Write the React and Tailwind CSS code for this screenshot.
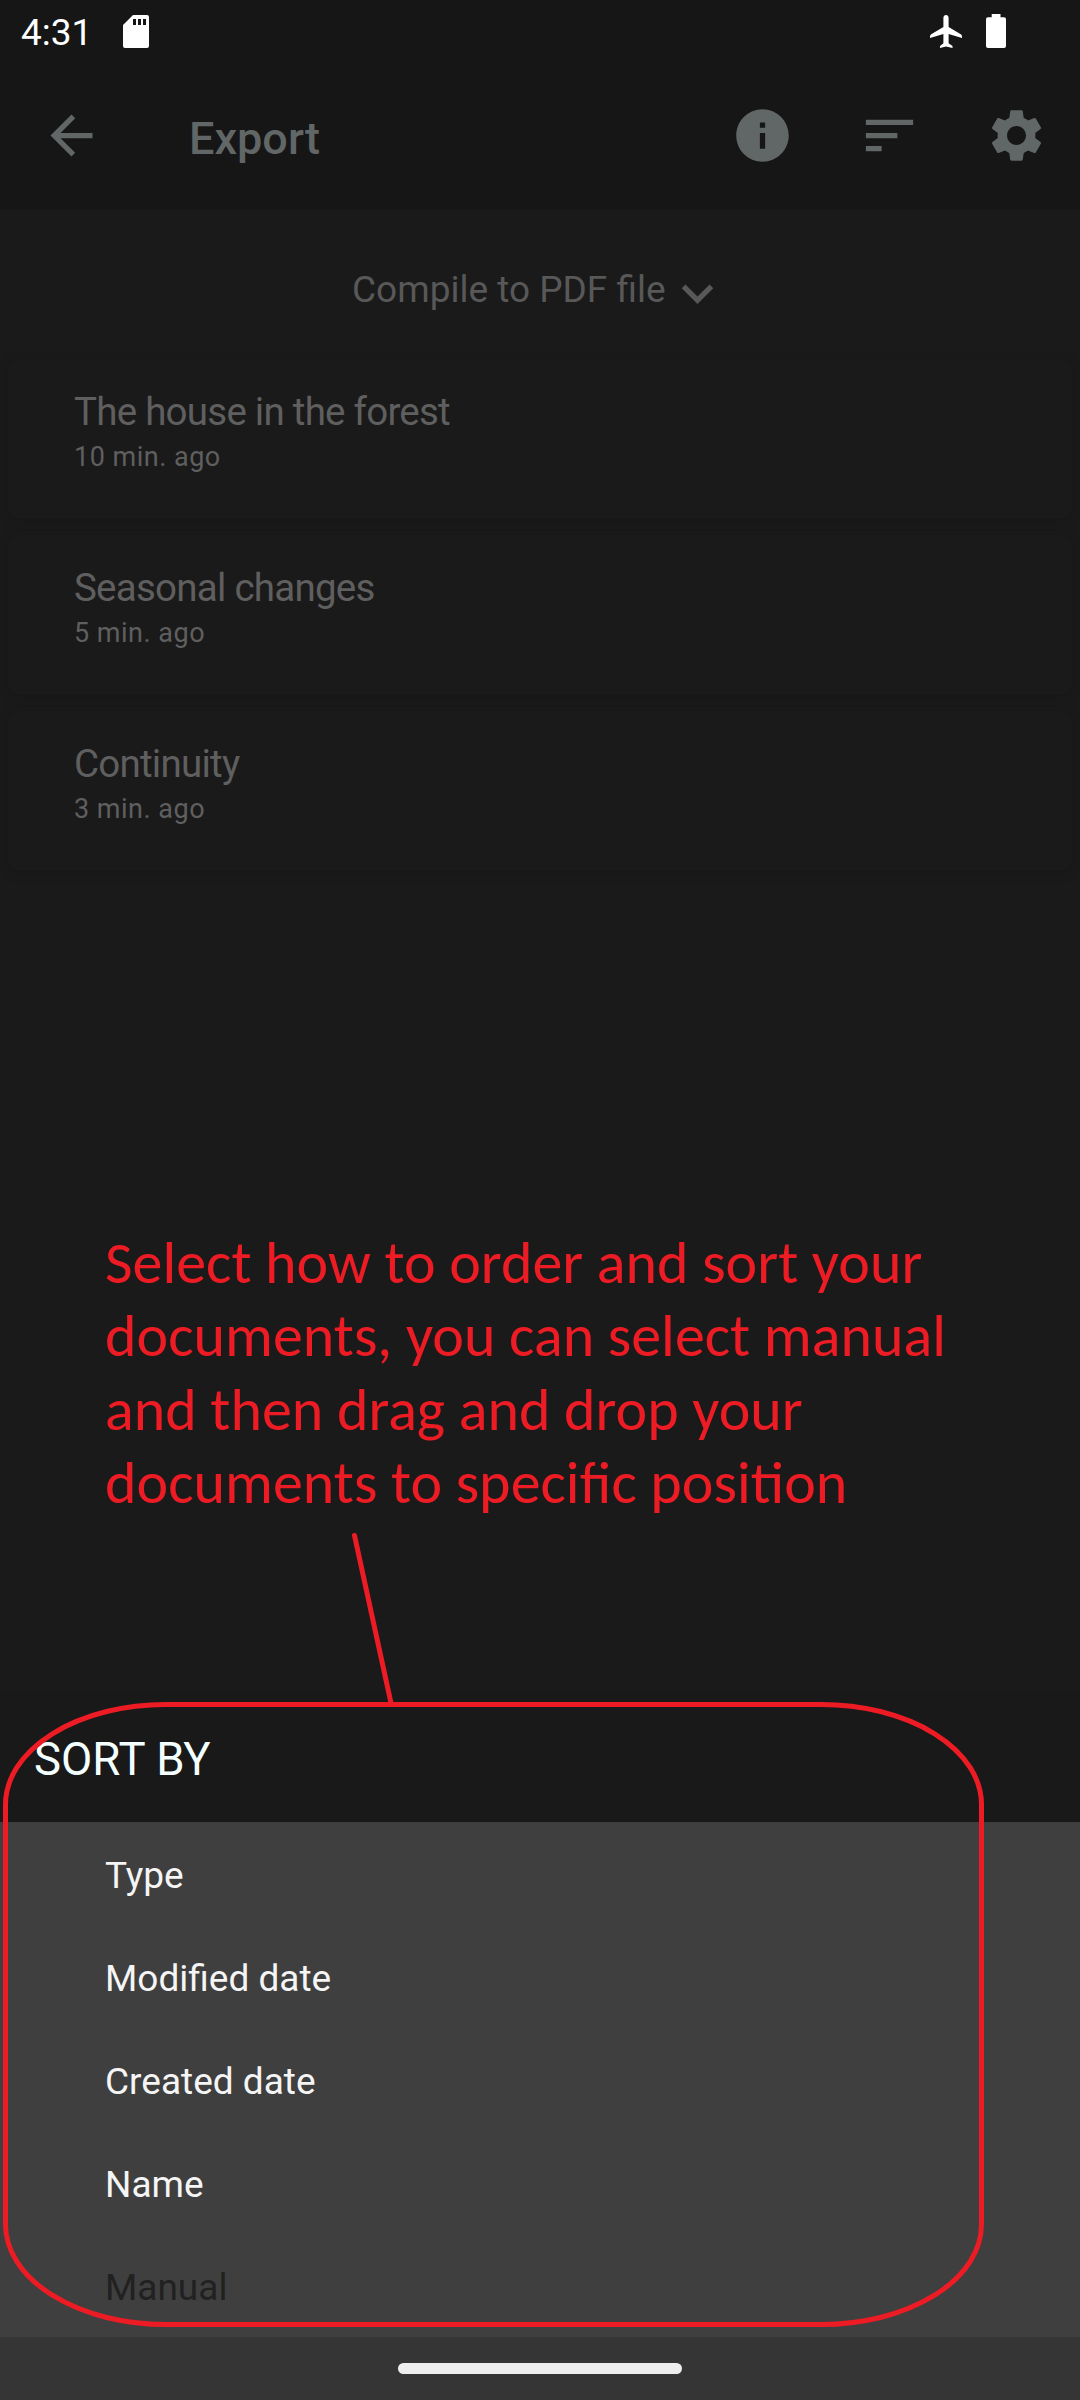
const documents = [
  { title: 'The house in the forest', time: '10 min. ago' },
  { title: 'Seasonal changes', time: '5 min. ago' },
  { title: 'Continuity', time: '3 min. ago' },
];

const sortOptions = [
  { label: 'Type' },
  { label: 'Modified date' },
  { label: 'Created date' },
  { label: 'Name' },
  { label: 'Manual', disabled: true },
];

const noteLines = [
  'Select how to order and sort your',
  'documents, you can select manual',
  'and then drag and drop your',
  'documents to specific position',
];

function Icon({ d, className }) {
  return (
    <svg viewBox="0 0 24 24" className={className} fill="currentColor">
      <path d={d} />
    </svg>
  );
}

function StatusBar() {
  return (
    <div className="flex h-[62px] items-start justify-between pl-[21px] pr-[74px] text-white">
      <div className="flex items-start">
        <span className="mt-[10px] w-[102px] text-[37px] leading-[46px]">4:31</span>
        <svg viewBox="0 0 26 33" className="mt-[15px] h-[33px] w-[26px]" fill="currentColor" fillRule="evenodd">
          <path d="M10 0H24a2 2 0 0 1 2 2V31a2 2 0 0 1-2 2H2a2 2 0 0 1-2-2V10ZM10 4v6h3V4ZM15 4v6h3V4ZM20 4v6h3V4Z" />
        </svg>
      </div>
      <div className="flex items-start gap-[24px] pt-[14px]">
        <svg viewBox="0 0 32 34" className="h-[34px] w-[32px]" fill="currentColor">
          <path d="M16 1c1.5 0 2.6 1.2 2.6 2.8V13l12.2 7.2q1.2.8 1.2 2.2v1.6L18.6 20v9.3l3.9 2.7v2L16 32.5 10 34v-2l3.400-2.700V20L0 24v-1.600q0-1.400 1.200-2.200L13.400 13V3.800C13.400 2.200 14.500 1 16 1Z" />
        </svg>
        <svg viewBox="0 0 20 34" className="h-[34px] w-[20px]" fill="currentColor">
          <path d="M5.700 0h8.800v3.300H18a2 2 0 0 1 2 2V32a2 2 0 0 1-2 2H2a2 2 0 0 1-2-2V5.300a2 2 0 0 1 2-2h3.700Z" />
        </svg>
      </div>
    </div>
  );
}

function Toolbar() {
  return (
    <div className="flex h-[147px] items-center pl-[40px] pr-[32px] text-[#616766]">
      <Icon className="h-[63px] w-[63px]" d="M20 11H7.83l5.590-5.590L12 4l-8 8 8 8 1.410-1.410L7.830 13H20v-2z" />
      <h1 className="ml-[86px] mt-[7px] flex-1 text-[45px] font-medium leading-[54px]">Export</h1>
      <div className="flex gap-[64px]">
        <Icon className="h-[63px] w-[63px]" d="M12 2C6.480 2 2 6.480 2 12s4.480 10 10 10 10-4.480 10-10S17.520 2 12 2zm1 15h-2v-6h2v6zm0-8h-2V7h2v2z" />
        <Icon className="h-[63px] w-[63px]" d="M3 18h6v-2H3v2zM3 6v2h18V6H3zm0 7h12v-2H3v2z" />
        <Icon
          className="h-[63px] w-[63px]"
          d="M19.14 12.94c.04-.3.06-.61.06-.94 0-.32-.02-.64-.07-.94l2.03-1.58c.18-.14.23-.41.12-.61l-1.92-3.32c-.12-.22-.37-.29-.59-.22l-2.39.96c-.5-.38-1.03-.7-1.62-.94L14.4 2.81c-.04-.24-.24-.41-.48-.41h-3.84c-.24 0-.43.17-.47.41L9.25 5.35C8.66 5.59 8.12 5.92 7.63 6.29L5.24 5.33c-.22-.08-.47 0-.59.22L2.74 8.87c-.12.21-.08.47.12.61l2.03 1.58C4.84 11.36 4.8 11.69 4.8 12s.02.64.07.94l-2.03 1.58c-.18.14-.23.41-.12.61l1.92 3.32c.12.22.37.29.59.22l2.39-.96c.5.38 1.03.7 1.62.94l.36 2.54c.05.24.24.41.48.41h3.84c.24 0 .44-.17.47-.41l.36-2.54c.59-.24 1.13-.56 1.62-.94l2.39.96c.22.08.47 0 .59-.22l1.92-3.32c.12-.22.07-.47-.12-.61L19.14 12.94zM12 15.6c-1.98 0-3.6-1.62-3.6-3.6s1.62-3.6 3.6-3.6 3.6 1.62 3.6 3.6-1.62 3.6-3.6 3.6z"
        />
      </div>
    </div>
  );
}

function DocumentCard({ title, time }) {
  return (
    <div className="h-[160px] rounded-xl bg-[#1a1a1a] pl-[66px] pt-[30px] text-[#5f5f5f] shadow-[0_2px_8px_#171717]">
      <div className="text-[38.5px] leading-[46px] tracking-[-0.75px]">{title}</div>
      <div className="mt-[5px] text-[27px] leading-[34px] tracking-[0.5px]">{time}</div>
    </div>
  );
}

function SortSheet() {
  return (
    <div>
      <div className="h-[132px] bg-[#191919] pl-[34px] pt-[43px] text-[45.5px] leading-[54px] text-[#f4ffff]">SORT BY</div>
      <ul className="h-[515px] bg-[#3f3f3f]">
        {sortOptions.map((o) => (
          <li
            key={o.label}
            className={`flex h-[103px] items-center pl-[105px] pt-[5px] text-[37px] ${o.disabled ? 'text-[#212121]' : 'text-[#f5f5f5]'}`}
          >
            {o.label}
          </li>
        ))}
      </ul>
      <div className="flex h-[63px] justify-center bg-[#353535] pt-[26px]">
        <div className="h-[11px] w-[284px] rounded-full bg-[#eeeeee]" />
      </div>
    </div>
  );
}

export default function App() {
  return (
    <div className="relative flex h-[2400px] w-[1080px] flex-col overflow-hidden bg-[#1a1a1a] font-['Roboto',sans-serif]">
      <header className="h-[210px] shrink-0 bg-[#161616]">
        <StatusBar />
        <Toolbar />
      </header>
      <div className="flex h-[149px] shrink-0 pl-[352px] pt-[57px] text-[#585858]">
        <span className="text-[37px] leading-[46px]">Compile to PDF file</span>
        <Icon className="mt-[-5px] h-[63px] w-[63px]" d="M16.59 8.59L12 13.17 7.41 8.59 6 10l6 6 6-6z" />
      </div>
      <main className="flex flex-1 flex-col gap-[16px] px-[8px]">
        {documents.map((d) => (
          <DocumentCard key={d.title} {...d} />
        ))}
        <p className="mt-[339px] ml-[97px] font-['Carlito','Lato',sans-serif] text-[60px] leading-[73.4px] text-[#ed1c24]">
          {noteLines.map((line) => (
            <span key={line} className="block whitespace-nowrap">{line}</span>
          ))}
        </p>
      </main>
      <SortSheet />
      <svg viewBox="0 0 1080 2400" className="pointer-events-none absolute inset-0 h-full w-full" fill="none" stroke="#ed1c24" strokeWidth="5">
        <path d="M354.5 1535.5 391 1703" strokeLinecap="round" />
        <rect x="5.5" y="1704.5" width="976" height="620" rx="160" ry="100" />
      </svg>
    </div>
  );
}
